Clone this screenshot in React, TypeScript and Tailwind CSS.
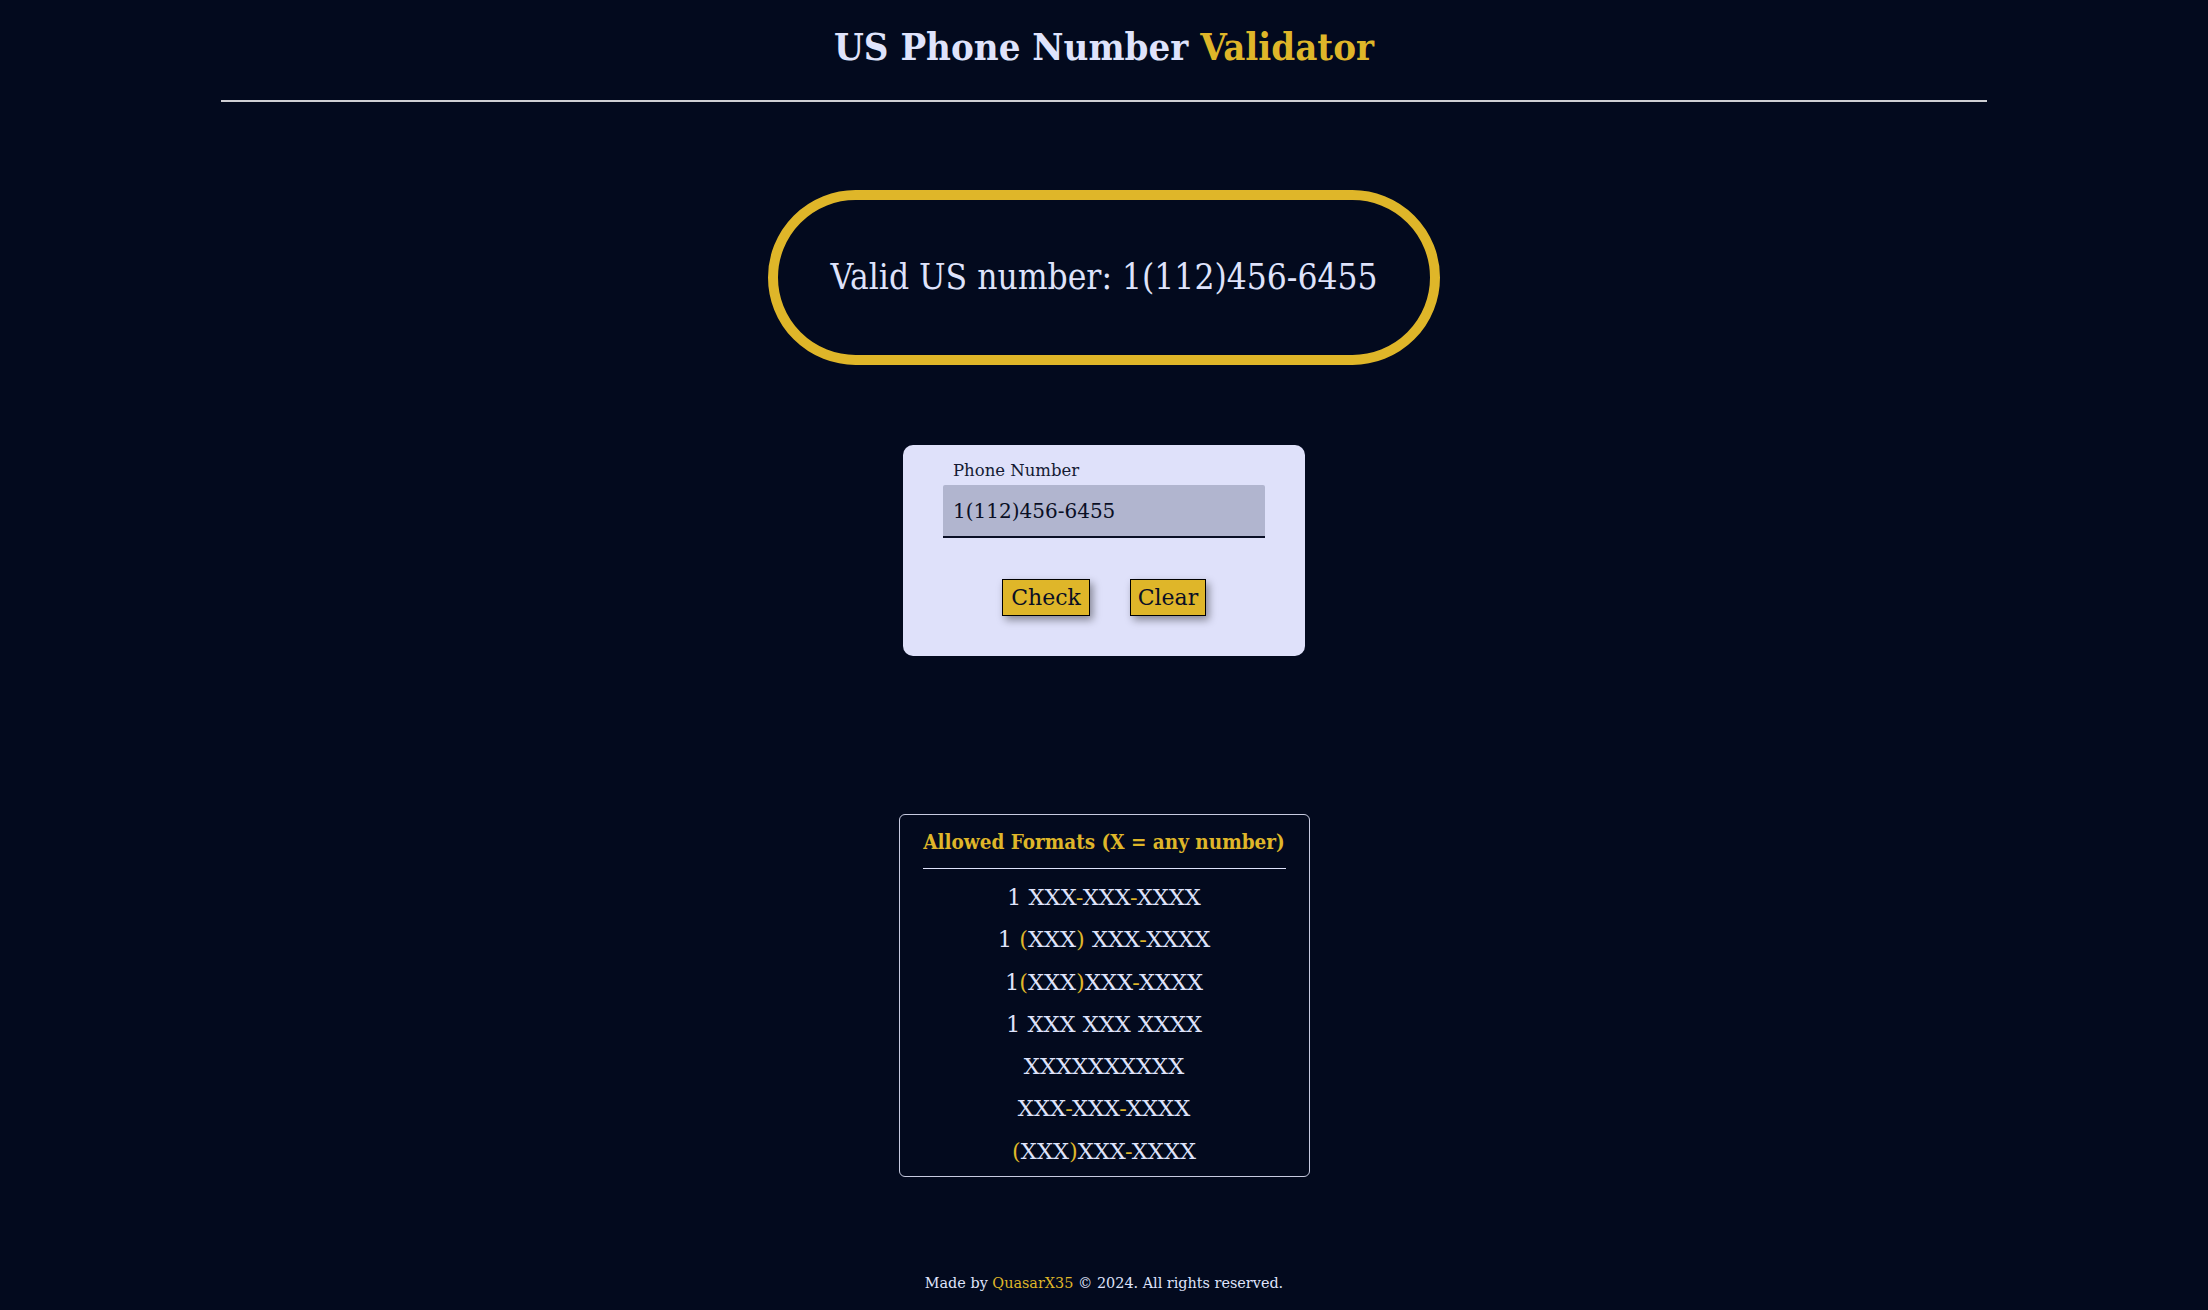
import React from "react";

const formats: string[] = [
  "1 XXX-XXX-XXXX",
  "1 (XXX) XXX-XXXX",
  "1(XXX)XXX-XXXX",
  "1 XXX XXX XXXX",
  "XXXXXXXXXX",
  "XXX-XXX-XXXX",
  "(XXX)XXX-XXXX",
];

// dashes and parens are picked out in yellow
function FormatLine({ text }: { text: string }) {
  return (
    <p className="leading-[42.25px] whitespace-pre">
      {text.split("").map((ch, i) =>
        ch === "-" || ch === "(" || ch === ")" ? (
          <span key={i} className="text-[#dfb629]">
            {ch}
          </span>
        ) : (
          <span key={i}>{ch}</span>
        )
      )}
    </p>
  );
}

export default function App() {
  return (
    <div className="min-h-screen bg-[#030a1e] text-[#dfe3fb] font-['DejaVu_Serif',serif] flex flex-col items-center">
      {/* Header */}
      <header className="w-full pt-[22px]">
        <h1 className="text-center text-[38px] font-bold leading-[50px] font-stretch-condensed font-['DejaVu_Serif_Condensed','DejaVu_Serif',serif]">
          US Phone Number <span className="text-[#dfb629]">Validator</span>
        </h1>
        <hr className="w-[80%] mx-auto mt-[28px] border-0 border-t-2 border-[#cfcfd4]" />
      </header>

      {/* Result */}
      <div className="mt-[88px] w-[672px] h-[175px] rounded-full border-[10px] border-[#dfb629] flex items-center justify-center">
        <p className="whitespace-nowrap text-[35px] font-stretch-condensed font-['DejaVu_Serif_Condensed','DejaVu_Serif',serif]">
          Valid US number: 1(112)456-6455
        </p>
      </div>

      {/* Form */}
      <div className="mt-[80px] w-[402px] h-[211px] rounded-[10px] bg-[#dfe1fa] px-[40px] pt-[14px]">
        <label className="block pl-[10px] text-[16.5px] leading-[24px] text-[#141a33]">Phone Number</label>
        <input
          readOnly
          value="1(112)456-6455"
          className="mt-[2px] w-[322px] h-[53px] bg-[#b1b5cf] border-0 border-b-2 border-[#0a0f25] rounded-t-[2px] px-[10px] text-[20px] text-[#0a0f25] outline-none font-['DejaVu_Serif',serif]"
        />
        <div className="mt-[41px] flex justify-center gap-[40px]">
          <button className="w-[88px] h-[37px] bg-[#dfb629] border border-black text-[22px] text-[#0a0f25] shadow-[3px_4px_8px_rgba(0,0,0,0.4)] font-['DejaVu_Serif',serif]">
            Check
          </button>
          <button className="w-[76px] h-[37px] bg-[#dfb629] border border-black text-[22px] text-[#0a0f25] shadow-[3px_4px_8px_rgba(0,0,0,0.4)] font-['DejaVu_Serif',serif]">
            Clear
          </button>
        </div>
      </div>

      {/* Allowed formats */}
      <div className="mt-[158px] w-[411px] h-[363px] rounded-[6px] border border-[#c8cbe0] px-[23px] pt-[13px] text-center">
        <h2 className="whitespace-nowrap text-[20.5px] font-bold leading-[28px] text-[#dfb629] pb-[12px] border-b border-[#dfe3fb] font-stretch-condensed font-['DejaVu_Serif_Condensed','DejaVu_Serif',serif]">
          Allowed Formats (X = any number)
        </h2>
        <div className="mt-[7px] text-[22.5px]">
          {formats.map((f) => (
            <FormatLine key={f} text={f} />
          ))}
        </div>
      </div>

      {/* Footer */}
      <footer className="mt-[96px] text-[14.4px] leading-[20px]">
        Made by <span className="text-[#dfb629]">QuasarX35</span> © 2024. All rights reserved.
      </footer>
    </div>
  );
}
